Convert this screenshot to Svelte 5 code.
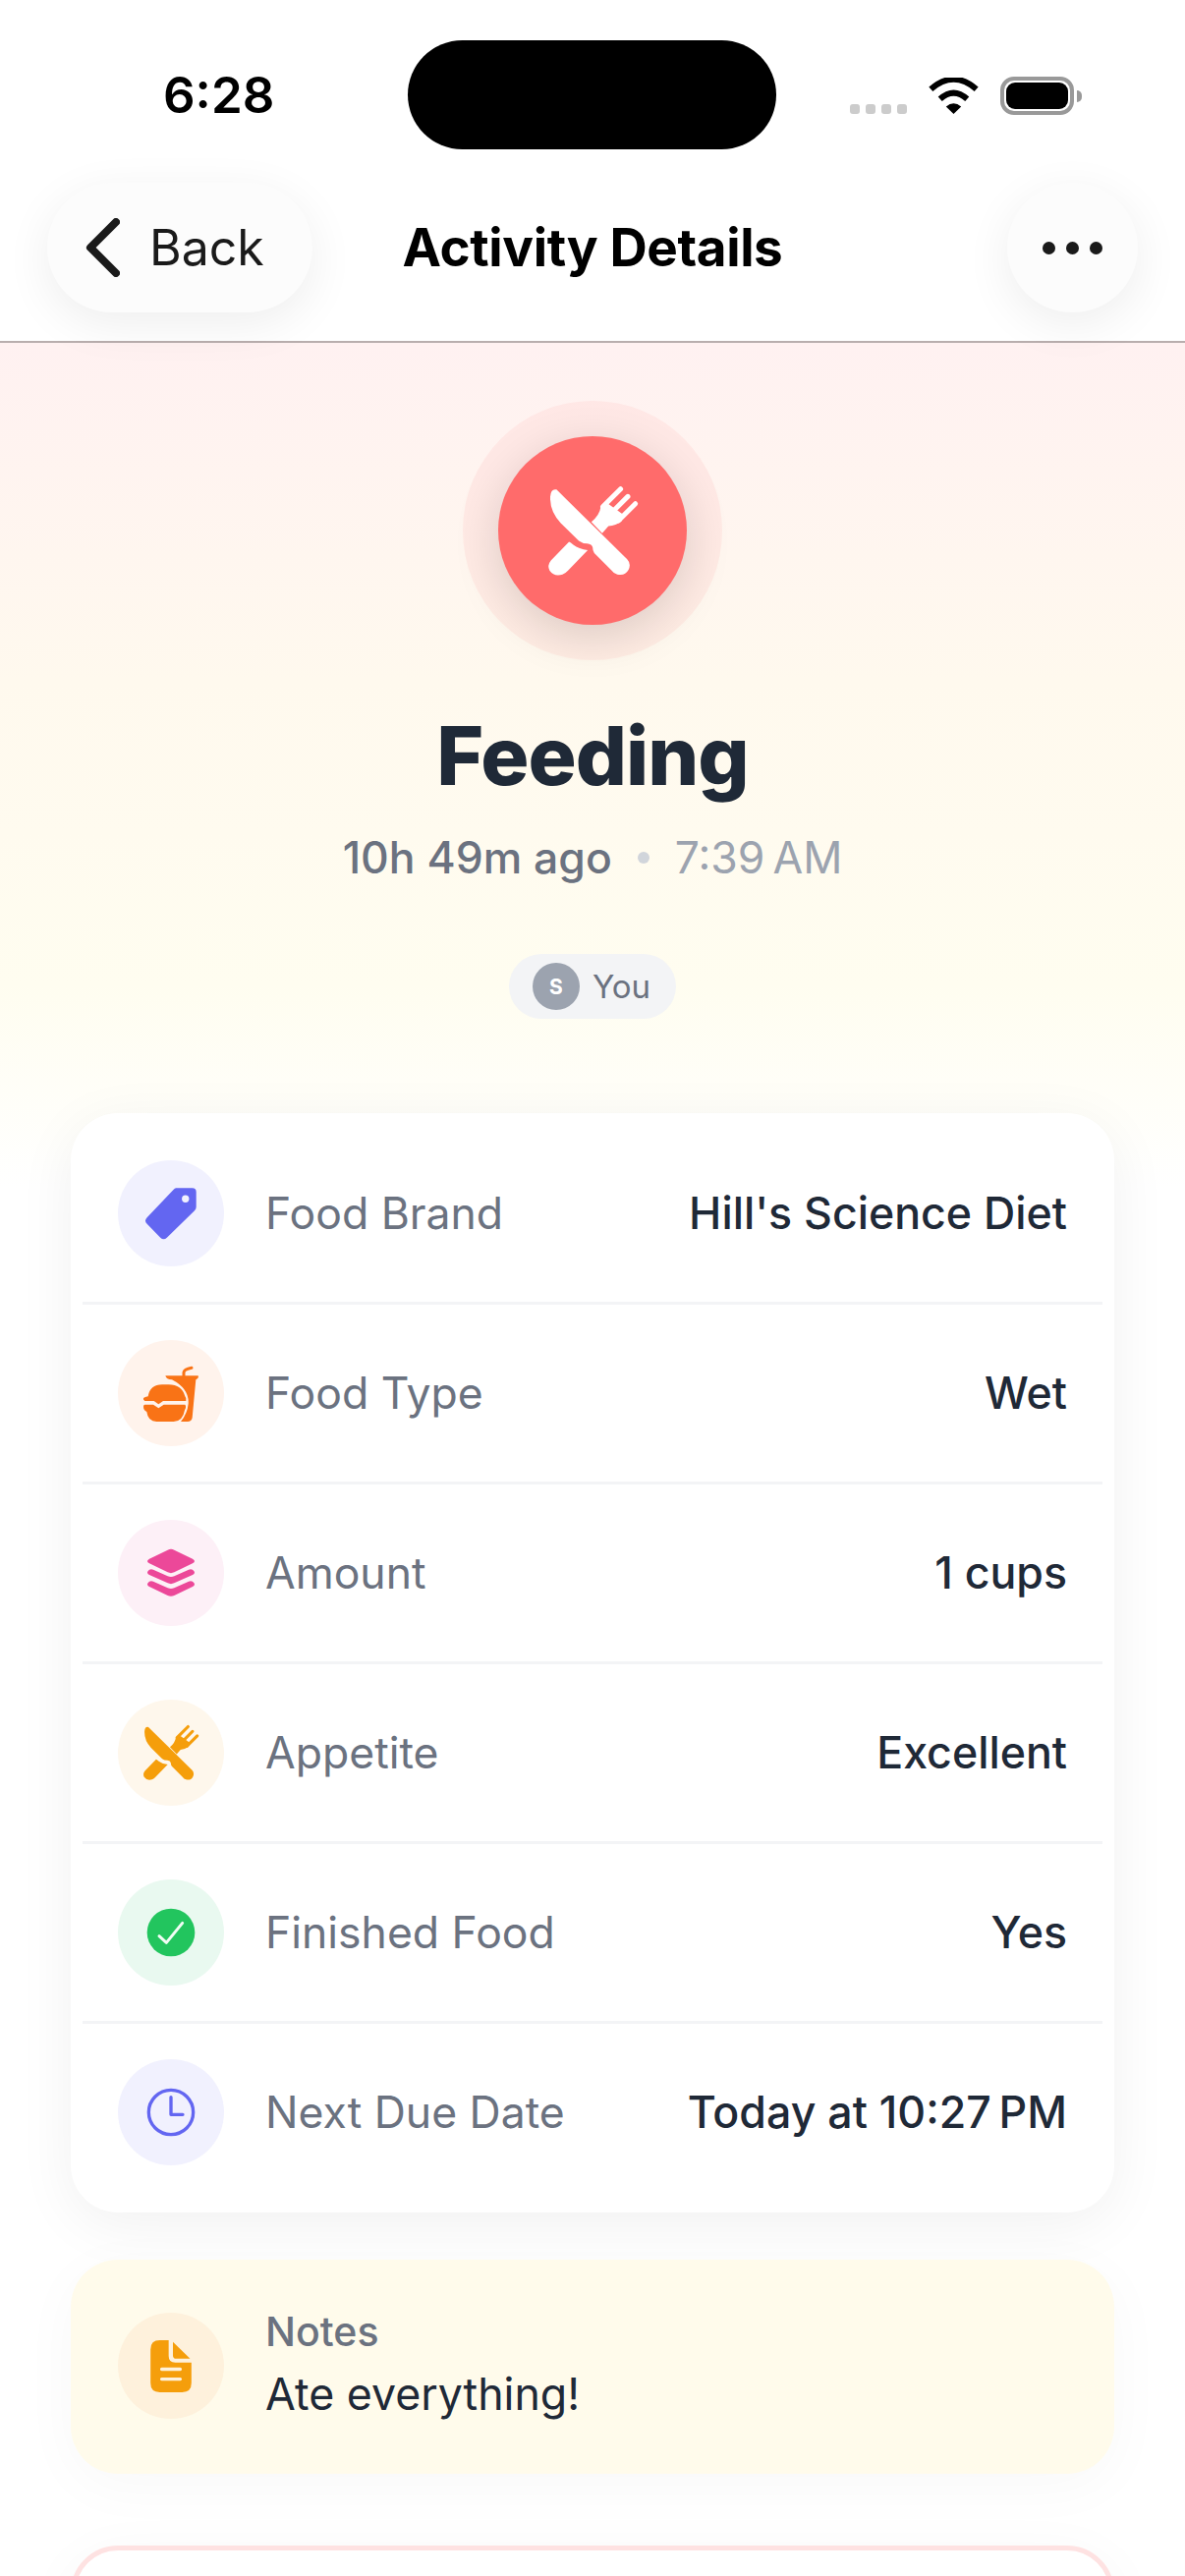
<script>
  const rows = [
    { key: 'tag', label: 'Food Brand', value: "Hill's Science Diet", bg: '#f1f1fe' },
    { key: 'burger', label: 'Food Type', value: 'Wet', bg: '#fff3ec' },
    { key: 'layers', label: 'Amount', value: '1 cups', bg: '#fdf0f7' },
    { key: 'cutlery', label: 'Appetite', value: 'Excellent', bg: '#fef7ec' },
    { key: 'check', label: 'Finished Food', value: 'Yes', bg: '#e9f9f0' },
    { key: 'clock', label: 'Next Due Date', value: 'Today at 10:27\u202fPM', bg: '#f1f1fe' },
  ];
</script>

{#snippet cutlery(size, color)}
  <svg width={size} height={size} viewBox="463 335 290 290">
    <g fill={color}>
      <path d="M535 513 L480 570 Q468 585 476 600 Q490 620 515 612 Q525 608 532 600 L592 538 Q565 535 548 522 Q540 515 535 513 Z" />
      <path d="M632 405 Q628 432 603 452 L636 487 L655 465 Q678 463 695 450 L700 430 L655 398 Z" />
    </g>
    <g stroke={color} stroke-width="15" stroke-linecap="round" fill="none">
      <path d="M692 352 L638 406" />
      <path d="M714 375 L662 427" />
      <path d="M737 397 L686 448" />
    </g>
    <path fill={color} d="M497 354 L712 566 Q725 580 716 598 Q705 618 682 612 Q672 610 665 600 L612 547 Q607 540 607 530 Q605 520 590 518 Q575 518 565 510 L510 456 Q476 420 478 375 Q480 350 497 354 Z" />
  </svg>
{/snippet}

<div class="page">
  <header class="top">
    <div class="status">
      <span class="time">6:28</span>
      <div class="island"></div>
      <div class="status-right">
        <div class="signal"><i></i><i></i><i></i><i></i></div>
        <svg class="wifi" width="51" height="37" viewBox="285 57 152 110">
          <path d="M292 92 Q361 32 430 92" fill="none" stroke="#000" stroke-width="18" />
          <path d="M320 122 Q361 85 402 122" fill="none" stroke="#000" stroke-width="18" />
          <path d="M361 167 L338 145 Q361 125 384 145 Z" fill="#000" />
        </svg>
        <div class="battery"><div class="battery-fill"></div></div>
        <div class="battery-cap"></div>
      </div>
    </div>

    <nav class="nav">
      <button class="back">
        <svg width="36" height="60" viewBox="0 0 36 60">
          <path d="M32 4 L6 30 L32 56" fill="none" stroke="#1a1a1a" stroke-width="8" stroke-linecap="round" stroke-linejoin="round" />
        </svg>
        <span>Back</span>
      </button>
      <h1>Activity Details</h1>
      <button class="more"><i></i><i></i><i></i></button>
    </nav>
  </header>

  <section class="hero">
    <div class="hero-ring">
      <div class="hero-icon">
        {@render cutlery(97, '#fff')}
      </div>
    </div>
    <h2>Feeding</h2>
    <div class="when">
      <span class="ago">10h 49m ago</span>
      <span class="sep"></span>
      <span class="clock-time">7:39&#8239;AM</span>
    </div>
    <div class="chip">
      <span class="avatar">S</span>
      <span>You</span>
    </div>
  </section>

  <section class="content">
    <div class="card">
      {#each rows as row}
        <div class="row">
          <div class="row-icon" style="background: {row.bg}">
            {#if row.key === 'tag'}
              <svg width="58" height="58" viewBox="255 258 175 175">
                <path fill="#6366f1" d="M358 268 H408 Q420 268 420 280 V326 Q420 332 415 337 L330 420 Q320 430 310 420 L269 378 Q259 368 269 358 L350 273 Q354 268 358 268 Z" />
                <circle cx="387" cy="301" r="11" fill={row.bg} />
              </svg>
            {:else if row.key === 'burger'}
              <svg width="58" height="58" viewBox="255 806 174 174">
                <path fill="#f97316" d="M325 840 H425 Q428 848 418 852 L407 968 Q405 980 392 980 H372 Q392 955 395 925 Q398 880 345 852 Q328 852 325 840 Z" />
                <path fill="none" stroke="#f97316" stroke-width="9" stroke-linecap="round" d="M381 842 V830 Q382 820 405 816" />
                <path fill="#f97316" d="M272 903 Q278 867 315 867 H335 Q375 867 385 903 Q390 908 388 917 H318 L304 927 L290 917 H262 Q256 912 258 908 Q262 905 272 903 Z" />
                <path fill="#f97316" d="M262 928 H288 L304 939 L320 928 H385 Q390 935 384 945 Q378 980 350 980 H298 Q272 980 268 950 Q258 945 258 935 Q258 928 262 928 Z" />
              </svg>
            {:else if row.key === 'layers'}
              <svg width="58" height="58" viewBox="255 276 174 174">
                <path fill="#ec4899" d="M332 293 Q342 288 352 293 L408 320 Q420 327 408 334 L352 361 Q342 366 332 361 L276 334 Q264 327 276 320 Z" />
                <path fill="#ec4899" d="M276 353 Q282 350 288 353 L332 373 Q342 377 352 373 L396 353 Q402 350 408 353 Q420 362 408 369 L352 394 Q342 399 332 394 L276 369 Q264 362 276 353 Z" />
                <path fill="#ec4899" d="M276 389 Q282 386 288 389 L332 409 Q342 413 352 409 L396 389 Q402 386 408 389 Q420 398 408 405 L352 432 Q342 437 332 432 L276 405 Q264 398 276 389 Z" />
              </svg>
            {:else if row.key === 'cutlery'}
              {@render cutlery(60, '#f59e0b')}
            {:else if row.key === 'check'}
              <svg width="58" height="58" viewBox="255 295 174 174">
                <circle cx="342" cy="382" r="73" fill="#22c55e" />
                <path d="M306 393 L328 413 L377 353" fill="none" stroke="#f0fdf4" stroke-width="9" stroke-linecap="round" stroke-linejoin="round" />
              </svg>
            {:else}
              <svg width="58" height="58" viewBox="255 844 174 174">
                <circle cx="342" cy="931" r="68" fill="none" stroke="#6366f1" stroke-width="10" />
                <path d="M342 885 V938 H378" fill="none" stroke="#6366f1" stroke-width="10" stroke-linecap="round" stroke-linejoin="round" />
              </svg>
            {/if}
          </div>
          <span class="label">{row.label}</span>
          <span class="value">{row.value}</span>
        </div>
      {/each}
    </div>

    <div class="notes">
      <div class="row-icon notes-icon">
        <svg width="42" height="53" viewBox="100 102 124 158">
          <path fill="#f59e0b" d="M128 102 H155 V150 Q155 170 175 170 H224 V232 Q224 260 196 260 H128 Q100 260 100 232 V130 Q100 102 128 102 Z" />
          <path fill="#f59e0b" d="M168 107 L220 158 H178 Q168 158 168 148 Z" />
          <path stroke="#fef1dc" stroke-width="10" stroke-linecap="round" d="M134 190 H190 M134 220 H190" />
        </svg>
      </div>
      <div class="notes-text">
        <span class="notes-label">Notes</span>
        <span class="notes-value">Ate everything!</span>
      </div>
    </div>

    <div class="danger"></div>
  </section>
</div>

<style>
  :global(body) {
    margin: 0;
    background: #fff;
  }

  .page {
    width: 1206px;
    height: 2622px;
    overflow: hidden;
    background: #fff;
    font-family: Inter, 'Noto Sans', sans-serif;
    color: #1f2937;
  }

  .top {
    position: relative;
    z-index: 2;
    height: 347px;
    background: #fff;
    border-bottom: 2px solid #b9aeae;
  }

  .status {
    position: relative;
    height: 186px;
  }

  .time {
    position: absolute;
    left: 166px;
    top: 67px;
    font-size: 51px;
    line-height: 60px;
    font-weight: 600;
    color: #000;
  }

  .island {
    position: absolute;
    left: 415px;
    top: 41px;
    width: 375px;
    height: 111px;
    border-radius: 56px;
    background: #000;
  }

  .status-right {
    position: absolute;
    left: 865px;
    top: 78px;
    display: flex;
    align-items: flex-start;
  }

  .signal {
    display: flex;
    gap: 6px;
    margin-top: 28px;
    margin-right: 22px;
  }

  .signal i {
    width: 10px;
    height: 10px;
    border-radius: 3px;
    background: #ccc;
  }

  .wifi {
    margin-top: 1px;
    margin-right: 22px;
  }

  .battery {
    box-sizing: border-box;
    width: 75px;
    height: 39px;
    padding: 2px;
    border: 4px solid #999;
    border-radius: 14px;
  }

  .battery-fill {
    height: 100%;
    border-radius: 9px;
    background: #000;
  }

  .battery-cap {
    width: 5px;
    height: 12px;
    margin: 14px 0 0 3px;
    border-radius: 0 6px 6px 0;
    background: #999;
  }

  .nav {
    display: grid;
    grid-template-columns: 1fr auto 1fr;
    align-items: center;
    padding: 0 48px;
    height: 132px;
  }

  .nav h1 {
    margin: 0;
    font-size: 53px;
    font-weight: 700;
    color: #000;
    letter-spacing: -0.4px;
  }

  .back,
  .more {
    display: flex;
    align-items: center;
    height: 132px;
    border: 0;
    background: #fcfcfc;
    border-radius: 66px;
    box-shadow: 0 12px 48px rgba(0, 0, 0, 0.07);
    font-family: inherit;
  }

  .back {
    width: 270px;
    padding: 0 0 0 38px;
    gap: 30px;
    font-size: 50px;
    color: #1a1a1a;
  }

  .more {
    justify-self: end;
    width: 133px;
    justify-content: center;
    gap: 11px;
    padding: 0;
  }

  .more i {
    width: 13px;
    height: 13px;
    border-radius: 50%;
    background: #1a1a1a;
  }

  .hero {
    display: flex;
    flex-direction: column;
    align-items: center;
    height: 860px;
    margin-bottom: -90px;
    padding-top: 59px;
    box-sizing: border-box;
    background: linear-gradient(180deg, #fff1f1 0%, #fff9ee 40%, #fffdf0 76%, #fff 100%);
  }

  .hero-ring {
    display: flex;
    align-items: center;
    justify-content: center;
    flex: none;
    width: 264px;
    height: 264px;
    border-radius: 50%;
    background: rgba(255, 107, 107, 0.08);
  }

  .hero-icon {
    display: flex;
    align-items: center;
    justify-content: center;
    width: 192px;
    height: 192px;
    border-radius: 50%;
    background: #ff6b6b;
    box-shadow: 0 12px 48px rgba(0, 0, 0, 0.14);
  }

  .hero h2 {
    margin: 48px 0 0;
    font-size: 82px;
    line-height: 100px;
    font-weight: 800;
    letter-spacing: -1px;
    color: #1f2937;
  }

  .when {
    display: flex;
    align-items: center;
    margin-top: 25px;
    font-size: 44.5px;
    line-height: 56px;
  }

  .ago {
    font-weight: 500;
    color: #6b7280;
  }

  .sep {
    width: 12px;
    height: 12px;
    margin: 0 26px;
    border-radius: 50%;
    background: #d1d5db;
  }

  .clock-time {
    color: #9ca3af;
  }

  .chip {
    display: flex;
    align-items: center;
    gap: 13px;
    height: 66px;
    margin-top: 70px;
    padding: 0 26px 0 24px;
    border-radius: 33px;
    background: #f3f4f6;
    font-size: 33px;
    color: #6b7280;
  }

  .avatar {
    display: flex;
    align-items: center;
    justify-content: center;
    width: 48px;
    height: 48px;
    border-radius: 50%;
    background: #9ca3af;
    color: #fff;
    font-size: 21px;
    font-weight: 700;
  }

  .content {
    position: relative;
    display: flex;
    flex-direction: column;
    gap: 48px;
    padding: 14px 72px 0;
  }

  .card {
    padding: 12px;
    border-radius: 48px;
    background: #fff;
    box-shadow: 0 12px 60px rgba(0, 0, 0, 0.06);
  }

  .row {
    display: flex;
    align-items: center;
    padding: 36px;
    border-bottom: 3px solid #f3f4f6;
  }

  .row:last-child {
    border-bottom: 0;
  }

  .row-icon {
    display: flex;
    align-items: center;
    justify-content: center;
    flex: none;
    width: 108px;
    height: 108px;
    border-radius: 50%;
  }

  .label {
    margin-left: 42px;
    font-size: 44.5px;
    color: #6b7280;
  }

  .value {
    margin-left: auto;
    font-size: 44.7px;
    font-weight: 500;
    color: #1f2937;
  }

  .notes {
    display: flex;
    align-items: center;
    gap: 42px;
    padding: 48px 48px 50px;
    border-radius: 48px;
    background: #fffbeb;
    box-shadow: 0 12px 60px rgba(0, 0, 0, 0.03);
  }

  .notes-icon {
    background: #fef1dc;
  }

  .notes-text {
    display: flex;
    flex-direction: column;
    gap: 8px;
  }

  .notes-label {
    font-size: 41px;
    line-height: 50px;
    font-weight: 500;
    color: #6b7280;
  }

  .notes-value {
    font-size: 44.7px;
    line-height: 62px;
    color: #1f2937;
  }

  .danger {
    box-sizing: border-box;
    height: 200px;
    margin-top: 25px;
    border: 5px solid #fee2e2;
    border-radius: 48px;
    background: #fff;
    box-shadow: 0 12px 60px rgba(0, 0, 0, 0.04);
  }
</style>
